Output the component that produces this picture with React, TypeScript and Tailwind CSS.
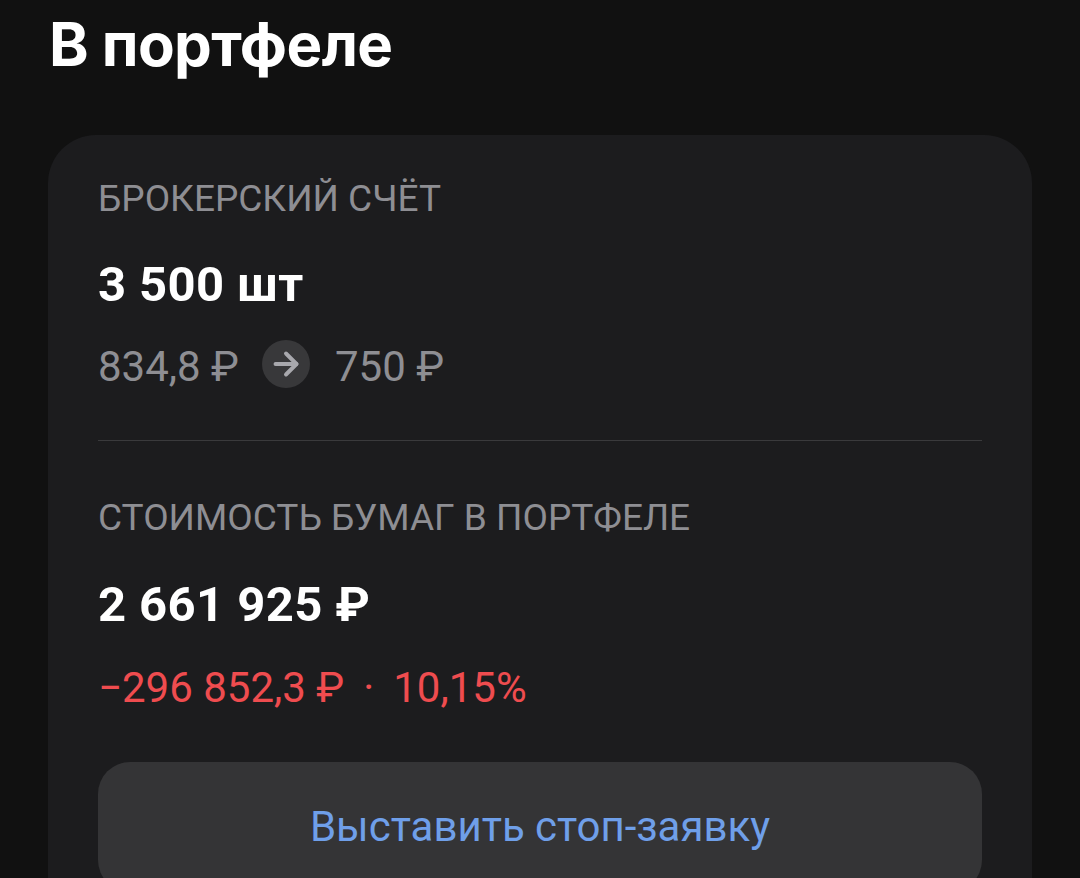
import React from 'react';
import { ArrowRight } from 'lucide-react';

export default function App() {
  return (
    <div className="min-h-screen w-[1080px] h-[878px] overflow-hidden bg-[#111111] font-['Roboto','Noto_Sans',sans-serif]">
      <h1 className="pl-[49px] pt-[8px] text-[60px] leading-[72px] font-bold text-white font-['Inter','Roboto',sans-serif] tracking-[-0.6px]">
        В портфеле
      </h1>

      <div className="mx-[48px] mt-[55px] rounded-[48px] bg-[#1c1c1e] px-[50px] pt-[44px] pb-[60px]">
        <p className="text-[37px] leading-[40px] text-[#8e8e93]">БРОКЕРСКИЙ СЧЁТ</p>
        <p className="mt-[38px] text-[49px] leading-[56px] font-bold tracking-[0.4px] text-white">
          3 500 шт
        </p>
        <div className="mt-[30px] flex items-center text-[42px] leading-[48px] text-[#8e8e93]">
          <span>834,8 ₽</span>
          <span className="ml-[23px] mr-[25px] flex h-[48px] w-[48px] -translate-y-[3px] items-center justify-center rounded-full bg-[#38383a]">
            <ArrowRight className="h-[36px] w-[36px] text-[#a8a8ad]" strokeWidth={2.6} />
          </span>
          <span>750 ₽</span>
        </div>

        <div className="mt-[49px] h-px bg-[#3a3a3c]" />

        <p className="mt-[57px] text-[37px] leading-[40px] text-[#8e8e93]">СТОИМОСТЬ БУМАГ В ПОРТФЕЛЕ</p>
        <p className="mt-[39px] text-[49px] leading-[56px] font-bold tracking-[0.4px] text-white">
          2 661 925 ₽
        </p>
        <p className="mt-[31px] flex text-[42px] leading-[48px] text-[#ef4c4f]">
          <span>−296 852,3 ₽</span>
          <span className="mx-[19px]">·</span>
          <span>10,15%</span>
        </p>

        <button className="mt-[50px] flex h-[130px] w-full justify-center rounded-[32px] bg-[#343436] pt-[41px] text-[42px] leading-[48px] text-[#6f9fe9]">
          Выставить стоп-заявку
        </button>
      </div>
    </div>
  );
}
